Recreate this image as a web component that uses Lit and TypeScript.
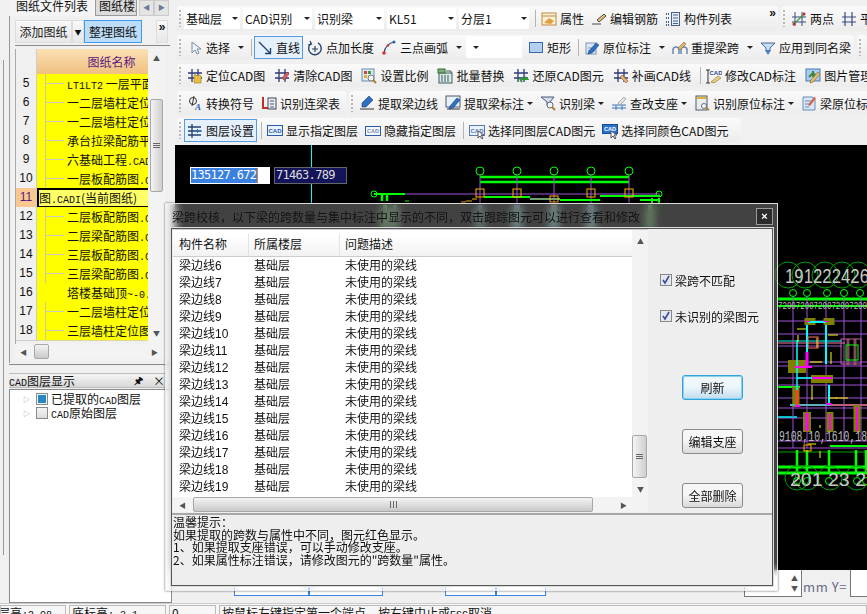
import { LitElement, html, css, svg, nothing } from 'lit';
import { customElement } from 'lit/decorators.js';

const grid = svg`<path d="M5 1v13M11 1v13M1 5h14M1 10h14" stroke="#2b3a78" stroke-width="1.3" fill="none"/>`;
const cadTag = (c: string) => svg`<rect x=".5" y="2.5" width="15" height="10" fill="#e8f2fc" stroke=${c}/><text x="8" y="10" font-size="6" font-weight="700" text-anchor="middle" font-family="Liberation Sans" fill=${c}>CAD</text>`;
const pencil = svg`<path d="M6 12l7-8 2 2-7 8-3 1z" fill="#e8c070" stroke="#8a6a30" stroke-width=".7"/>`;
const bluePen = svg`<path d="M5 11l7-8 3 2-7 8-4 1z" fill="#2f6fc0" stroke="#173f80" stroke-width=".6"/>`;

const icons: Record<string, unknown> = {
  cursor: svg`<path d="M5 2v11l3-3 2 4 2-1-2-4h4z" fill="#eef2fa" stroke="#7d8ba3"/>`,
  line: svg`<path d="M2 2l11 11M8 13.5h5.5V8" fill="none" stroke="#1f3f6e" stroke-width="1.3"/>`,
  addLen: svg`<path d="M4 3.5a6.3 6.3 0 1 0 7-.6" fill="none" stroke="#24406e" stroke-width="1.4"/><path d="M3 1l1.500 3L1 5M8 6v6M5 9h6" fill="none" stroke="#24406e" stroke-width="1.200"/>`,
  arc: svg`<path d="M3 13C4 7 8 3 13 2" fill="none" stroke="#24406e" stroke-width="1.200"/><circle cx="3" cy="13" r="1.800" fill="#d8382c"/><circle cx="7" cy="5.500" r="1.300" fill="#d8382c"/><circle cx="13" cy="2" r="1.500" fill="#2a62b8"/>`,
  rect: svg`<rect x="1.500" y="2.500" width="13" height="10" fill="#b4cef0" stroke="#3668b0"/>`,
  attr: svg`<rect x="1" y="2" width="14" height="12" fill="#fbf0d8" stroke="#c08a40"/><path d="M1 5h14" stroke="#c08a40"/><path d="M3 12l5-5 5 3-3 3z" fill="#e0a040"/>`,
  rebar: svg`<path d="M1 13h9M6 9l7-6 2 2-7 6z" fill="#e8c070" stroke="#4a4a4a"/>`,
  list: svg`<path d="M1 3h3M1 7h3M1 11h3M1 14h3" stroke="#44618c" stroke-dasharray="1 1" stroke-width="2"/><rect x="6.500" y="1.500" width="8" height="13" fill="#e6eef8" stroke="#44618c"/><path d="M8 4h5M8 7h5M8 10h5M8 12.500h5" stroke="#44618c"/>`,
  twoPt: svg`<path d="M4 1v14M11 1v14M1 6h14M1 11h14" stroke="#3a4a80"/><path d="M2 14L14 2" stroke="#3c9a3c" stroke-width="1.300"/><circle cx="3" cy="13" r="1.500" fill="#c03028"/><circle cx="13" cy="3" r="1.500" fill="#c03028"/>`,
  grid2: svg`<path d="M4 1v14M11 1v14M1 6h14M1 11h14" stroke="#3a4a80" stroke-width="1.200"/>`,
  spanFix: svg`<rect x="2" y="3" width="10" height="11" fill="#dce8f8" stroke="#7a94b8"/><path d="M4 11h7M4 8h4" stroke="#7a94b8"/>${bluePen}`,
  respan: svg`<path d="M1 14v-4a3 3 0 0 1 6 0v4M9 14v-4a3 3 0 0 1 6 0v4" fill="none" stroke="#6a8ab0" stroke-width="1.500"/><path d="M6 8l6-6 2 2-6 6z" fill="#e0b070" stroke="#8a6a30" stroke-width=".6"/>`,
  apply: svg`<path d="M1 3h14l-5 5v3H6V8z" fill="#c8dcf4" stroke="#4a6a98"/><path d="M5 10l3 5 3-5z" fill="#4a7ac0"/>`,
  locate: svg`${grid}<path d="M7 15V8l1-2 1 2 1-1 1 1 1-1 2 1v7z" fill="#e8c040" stroke="#a07820" stroke-width=".6"/>`,
  clear: svg`${grid}<path d="M8 10l5-6 2 2-5 6z" fill="#e06060" stroke="#803030" stroke-width=".6"/>`,
  scale: svg`<rect x="1" y="1" width="12" height="12" fill="#d8ecf8" stroke="#6a8aa8"/><rect x="3" y="3" width="3" height="3" fill="#d84030"/><rect x="7" y="3" width="3" height="3" fill="#3c9a3c"/><rect x="3" y="7" width="3" height="3" fill="#e8b030"/><circle cx="10" cy="10" r="3" fill="#f0f4f8" stroke="#7a7a7a"/><path d="M12 12l3 3" stroke="#b08030" stroke-width="2"/>`,
  batch: svg`<rect x="2" y="5" width="13" height="10" fill="#dce8e8" stroke="#3a6060"/><path d="M5 7v7M8 7v7M11 7v7" stroke="#3a6060"/><rect x="1" y="1" width="7" height="4" fill="#7ab07a" stroke="#3a6a3a"/><path d="M9 3h5v2" fill="none" stroke="#3a6060"/>`,
  restore: svg`${grid}<path d="M7 11h7l-2-2M7 11l2 3" fill="none" stroke="#2c9a2c" stroke-width="2"/>`,
  patch: svg`${grid}<path d="M7 9l2-2 6 6-2 2z" fill="#e8b070" stroke="#8a5a30" stroke-width=".6"/>`,
  modCad: svg`<path d="M2 2v13M0 2h4M0 15h4" stroke="#333"/><text x="10" y="7" font-size="6" font-weight="700" text-anchor="middle" font-family="Liberation Sans" fill="#2a4a90">CAD</text><path d="M5 14l7-6 3 2-7 5z" fill="#e8d080" stroke="#8a6a30" stroke-width=".6"/>`,
  picture: svg`<rect x="1" y="1" width="14" height="12" fill="#a8ccf0" stroke="#4a7ab0"/><path d="M8 3v6M4 9l4-4 4 4" stroke="#3c8a3c" stroke-width="2" fill="none"/>${pencil}`,
  convert: svg`<circle cx="6" cy="6" r="3.500" fill="none" stroke="#333"/><path d="M7 1L5 11" stroke="#333"/><text x="11" y="15" font-size="9" font-style="italic" font-weight="700" font-family="Liberation Serif" fill="#2a62b8" text-anchor="middle">A</text>`,
  linkTable: svg`<path d="M2 2v11h6" fill="none" stroke="#c03028" stroke-width="2"/><rect x="7" y="3" width="8" height="11" fill="#e8eef8" stroke="#445"/><path d="M9 6h4M9 9h4M9 12h4" stroke="#556"/>`,
  edge: svg`<path d="M1 14h14" stroke="#333"/><path d="M3 12V8l7-7 4 4-7 7z" fill="#2f6fc0" stroke="#173f80" stroke-width=".6"/>`,
  mark: svg`<rect x="1" y="1" width="14" height="11" fill="#e8f0f8" stroke="#4a5a70"/><path d="M2 14h13" stroke="#333"/>${bluePen}`,
  beam: svg`<path d="M1 2h13l-4 5v3H7V7z" fill="#d0dcec" stroke="#4a5a78"/><circle cx="10" cy="10" r="3" fill="#f0f4f8" stroke="#667"/><path d="M12 12l3 3" stroke="#b08030" stroke-width="2"/>`,
  support: svg`<path d="M1 10h14M1 13h14" stroke="#3a78c0"/><path d="M5 10v5M11 10v5" stroke="#3a78c0"/><path d="M7 8l6-6 2 2-6 6z" fill="#e4e4e4" stroke="#909090" stroke-width=".7"/>`,
  inPlace: svg`<rect x="2" y="1" width="11" height="14" fill="#e8eef0" stroke="#4a5a68"/><rect x="3" y="2" width="9" height="2" fill="#e0b030"/><circle cx="10" cy="11" r="2.500" fill="#fff" stroke="#667"/><path d="M12 13l3 2" stroke="#b08030" stroke-width="2"/>`,
  inPlace2: svg`<path d="M2 2h9l3 2v11H2z" fill="#d8e6f8" stroke="#6a8ab8"/><path d="M4 6h6M4 9h6M4 12h4" stroke="#6a8ab8"/><path d="M7 10l6-8 2 1-6 8z" fill="#d86040"/>`,
  layers: svg`<path d="M5 1v14M1 4h13M1 8h13M1 12h13" stroke="#24406e" stroke-width="1.300"/><path d="M9 8h6M9 8l2-2M9 8l2 2" stroke="#2c6ac0"/>`,
  cadShow: cadTag('#2a5aa8'),
  cadHide: svg`<rect x=".5" y="3.500" width="15" height="9" fill="#f4f8fc" stroke="#2a5aa8"/><text x="8" y="10" font-size="5.500" font-weight="700" text-anchor="middle" font-family="Liberation Sans" fill="#7a8aa8">CAD</text>`,
  cadPick: svg`${cadTag('#5a7ab0')}<path d="M9 8v7l2-2 2 3 1-1-2-3h3z" fill="#fff" stroke="#556"/>`,
  cadColor: svg`<rect x=".5" y="1.500" width="15" height="9" fill="#2a72d0" stroke="#1a4a98"/><text x="8" y="8" font-size="5.500" font-weight="700" text-anchor="middle" font-family="Liberation Sans" fill="#fff">CAD</text><path d="M9 8v7l2-2 2 3 1-1-2-3h3z" fill="#fff" stroke="#556"/>`,
};

type Item =
  | { k: 'sel'; t: string; w: number }
  | { k: 'sep' }
  | { k: 'more' }
  | { k: 'btn'; i: string; t: string; drop?: boolean; on?: boolean };

const b = (i: string, t: string, drop = false, on = false): Item => ({ k: 'btn', i, t, drop, on });
const sel = (t: string, w: number): Item => ({ k: 'sel', t, w });
const sep: Item = { k: 'sep' };

const rows: { w?: number; items: Item[] }[][] = [
  [
    {
      w: 601,
      items: [
        sel('基础层', 56), sel('CAD识别', 69), sel('识别梁', 69), sel('KL51', 69), sel('分层1', 70), sep,
        b('attr', '属性'), b('rebar', '编辑钢筋'), b('list', '构件列表'), { k: 'more' },
      ],
    },
    { items: [b('twoPt', '两点'), b('grid2', '平')] },
  ],
  [
    {
      w: 677,
      items: [
        b('cursor', '选择', true), sep, b('line', '直线', false, true), b('addLen', '点加长度'), b('arc', '三点画弧', true),
        sel('', 56), b('rect', '矩形'), sep, b('spanFix', '原位标注', true), b('respan', '重提梁跨', true), b('apply', '应用到同名梁'),
      ],
    },
    { items: [] },
  ],
  [
    {
      items: [
        b('locate', '定位CAD图'), b('clear', '清除CAD图'), b('scale', '设置比例'), b('batch', '批量替换'),
        b('restore', '还原CAD图元'), b('patch', '补画CAD线'), sep, b('modCad', '修改CAD标注'), b('picture', '图片管理'),
      ],
    },
  ],
  [
    { w: 169, items: [b('convert', '转换符号'), b('linkTable', '识别连梁表')] },
    {
      items: [
        b('edge', '提取梁边线'), b('mark', '提取梁标注', true), b('beam', '识别梁', true), b('support', '查改支座', true),
        b('inPlace', '识别原位标注', true), b('inPlace2', '梁原位标注'),
      ],
    },
  ],
  [
    {
      w: 564,
      items: [
        b('layers', '图层设置', false, true), sep, b('cadShow', '显示指定图层'), b('cadHide', '隐藏指定图层'), sep,
        b('cadPick', '选择同图层CAD图元'), b('cadColor', '选择同颜色CAD图元'),
      ],
    },
  ],
];

const drawings: [number, string, boolean?][] = [
  [5, 'LT1LT2 一层平面图', true],
  [6, '一二层墙柱定位图', true],
  [7, '一二层墙柱定位图', true],
  [8, '承台拉梁配筋平面', true],
  [9, '六基础工程.CADI', true],
  [10, '一层板配筋图.CADI', true],
  [11, '图.CADI(当前图纸)'],
  [12, '二层板配筋图.CADI', true],
  [13, '二层梁配筋图.CADI', true],
  [14, '三层板配筋图.CADI', true],
  [15, '三层梁配筋图.CADI', true],
  [16, '塔楼基础顶~-0.05', false],
  [17, '一二层墙柱定位图', true],
  [18, '三层墙柱定位图.C', true],
];

// [x1, y1, x2, y2, colour, width]
type Seg = [number, number, number, number, string, number];
const G = '#00ff00';
const P = '#a050d8';
const C = '#00ffff';
const M = '#ff00ff';
const Y = '#ffff00';
const O = '#808000';
const A = '#ffb000';

const segs: Seg[] = [
  // upper elevation
  [374, 194, 405, 194, G, 2], [382, 195, 382, 201, G, 2.5], [387, 195, 387, 201, G, 2.5], [405, 201, 409, 201, G, 1],
  [405, 194, 660, 194, P, 1], [480, 177, 629, 177, G, 2.5], [480, 182, 629, 182, G, 2.5],
  [480, 175, 480, 203, P, 1], [517, 175, 517, 203, P, 1], [554, 175, 554, 203, P, 1], [591, 175, 591, 203, P, 1], [629, 175, 629, 203, P, 1],
  [484, 197, 530, 197, G, 2], [530, 199, 560, 199, '#70a070', 2], [560, 200, 600, 200, G, 2], [600, 196, 660, 196, G, 2], [640, 200, 660, 200, G, 2],
  [461, 202, 466, 202, A, 1], [466, 201, 472, 201, A, 1], [472, 199, 477, 199, A, 1],
  [659, 198, 659, 204, G, 2], [652, 198, 652, 204, G, 2],
  [385, 205, 385, 232, '#70c070', 4], [395, 205, 395, 232, '#70a070', 4], [480, 205, 480, 232, '#70a0a0', 4], [517, 205, 517, 232, '#70a0a0', 6], [554, 205, 554, 232, '#70a0a0', 6], [591, 205, 591, 232, '#70a0a0', 6], [650, 205, 650, 232, '#70c070', 4],
  // right plan: horizontal grid
  [778, 299, 867, 299, G, 3], [778, 306, 867, 306, G, 2],
  [778, 321, 867, 321, P, 1], [778, 334, 867, 334, P, 1], [778, 341, 842, 341, C, 1], [778, 343, 845, 343, '#ff80a0', 1], [778, 346, 842, 346, P, 1],
  [778, 362, 867, 362, P, 1], [778, 366, 867, 366, P, 1], [778, 378, 867, 378, P, 1], [778, 385, 867, 385, P, 1], [778, 387, 800, 387, G, 2], [778, 398, 867, 398, P, 1],
  [790, 405, 867, 405, '#ff80a0', 1.5], [778, 408, 867, 408, P, 1], [778, 418, 867, 418, P, 1], [778, 417, 797, 417, C, 1.500], [778, 441, 867, 441, P, 1], [778, 448, 867, 448, P, 1],
  [830, 446, 867, 446, G, 2], [778, 452, 867, 452, '#00a000', 1], [778, 467, 867, 467, G, 3], [778, 473, 867, 473, G, 3],
  // right plan: grid verticals
  [793, 297, 793, 448, P, 1], [807, 297, 807, 448, P, 1], [826, 297, 826, 441, P, 1], [844, 297, 844, 441, P, 1], [861, 297, 861, 441, P, 1],
  // olive walls
  [810, 318, 810, 325, O, 11], [829, 318, 829, 325, O, 11], [797, 360, 797, 373, O, 18], [822, 375, 822, 383, O, 22], [796, 387, 796, 407, O, 7],
  [807, 412, 807, 432, O, 8], [830, 412, 830, 432, O, 7], [857, 405, 857, 432, O, 7], [848, 339, 848, 365, '#804858', 3], [855, 339, 855, 365, '#804858', 3],
  // beams
  [808, 322, 826, 322, C, 2], [807, 325, 807, 360, C, 2], [826, 325, 826, 364, C, 2], [829, 385, 829, 405, C, 2], [797, 378, 830, 378, C, 1.500], [797, 340, 797, 395, C, 1.500], [790, 405, 830, 405, C, 1],
  [808, 321, 808, 322, M, 5], [826, 321, 826, 322, M, 5], [829, 403, 829, 405, M, 5], [795, 367, 812, 367, M, 2], [807, 352, 807, 366, M, 3], [812, 378, 832, 378, M, 2], [797, 390, 797, 407, '#ff4020', 2.500], [807, 413, 807, 431, M, 3], [830, 414, 830, 430, M, 2], [857, 407, 857, 431, M, 2], [798, 405, 798, 407, M, 5],
  // yellow ticks
  [797, 329, 806, 329, Y, 1], [828, 335, 838, 335, Y, 1], [798, 335, 798, 342, Y, 1], [817, 338, 817, 348, Y, 1], [831, 352, 831, 364, Y, 1], [810, 362, 822, 362, Y, 1], [836, 398, 848, 398, Y, 1], [812, 400, 812, 385, Y, 1], [820, 425, 820, 428, Y, 1], [808, 444, 816, 444, Y, 1], [820, 451, 820, 458, Y, 1], [829, 398, 837, 398, Y, 1],
  // lower stubs
  [797, 450, 797, 472, G, 2.500], [807, 450, 807, 472, G, 2.500], [829, 450, 829, 472, G, 2.500], [856, 450, 856, 472, G, 2.500], [866, 450, 866, 472, G, 2.500],
];

const dots: [number, number, number, string][] = [
  [480, 171, 4, G], [517, 171, 4, G], [554, 171, 4, G], [591, 171, 4, G], [629, 171, 4, G], [374, 194, 3, G], [659, 194, 3, G],
  [793, 293, 3.500, G], [807, 293, 3.500, G], [827, 293, 3.500, G], [844, 293, 3.500, G], [860, 293, 3.500, G],
  [788, 275, 13, '#00a000'], [805, 275, 13, '#00a000'], [825, 275, 13, '#00a000'], [842, 275, 13, '#00a000'], [858, 275, 13, '#00a000'],
  [797, 478, 12, '#00a000'], [807, 478, 12, '#00a000'], [830, 478, 12, '#00a000'], [857, 478, 12, '#00a000'],
  [797, 481, 3.500, G], [807, 481, 3.500, G], [829, 481, 3.500, G], [857, 481, 3.500, G], [866, 481, 3.500, G],
];

const boxes: [number, number, number, number, string][] = [
  [476, 189, 8, 8, A], [513, 189, 8, 8, A], [550, 196, 8, 6, A], [587, 189, 8, 8, A], [625, 189, 8, 8, A],
  [841, 339, 20, 25, '#c060a0'], [846, 345, 12, 15, G], [808, 337, 10, 11, '#ff7060'], [804, 445, 7, 6, A],
];

const listRows = Array.from({ length: 14 }, (_, i) => i + 6);

@customElement('app-root')
export class AppRoot extends LitElement {
  static override styles = css`
    :host {
      display: block;
      position: relative;
      width: 867px;
      height: 614px;
      overflow: hidden;
      background: #f0f0f0;
      font: 12px 'Noto Sans CJK SC', sans-serif;
      color: #111;
    }

    .app {
      display: grid;
      grid-template-columns: 175px 692px;
      height: 603px;
    }

    /* left dock */
    .left {
      display: flex;
      flex-direction: column;
      padding-left: 12px;
      box-sizing: border-box;
      width: 172px;
      min-height: 0;
      background:
        linear-gradient(#999, #999) 3px 60px / 1px 495px no-repeat,
        linear-gradient(#999, #999) 9px 15px / 1px 348px no-repeat;
    }

    .tabs {
      display: flex;
      height: 16px;
      overflow: hidden;
      line-height: 12px;
      font-size: 12px;
      margin-left: -3px;
    }

    .tab {
      padding: 0 7px;
      background: #f4f4f4;
      border-right: 1px solid #999;
    }

    .tab.off {
      background: #dcdcdc;
      padding: 0 0 0 3px;
      width: 41px;
      box-sizing: border-box;
      border-bottom: 1px solid #999;
      overflow: hidden;
      white-space: nowrap;
      margin-right: 2px;
    }

    .arrow-btn {
      width: 15px;
      background: #e4e4e4;
      border: 1px solid #ccc;
      box-sizing: border-box;
      color: #6a7a9a;
      text-align: center;
      font-size: 7px;
      line-height: 13px;
    }

    .tools {
      display: flex;
      align-items: stretch;
      height: 23px;
      margin: 4px 2px 0 3px;
      padding-bottom: 2px;
      border-bottom: 1px solid #888;
    }

    .tool {
      display: flex;
      align-items: center;
      justify-content: center;
      background: linear-gradient(#f8f8f8, #e8e8e8);
      border: 1px solid #ddd;
      box-sizing: border-box;
    }

    .tool.add {
      width: 57px;
      color: #222;
    }

    .tool.drop {
      width: 12px;
      font-size: 7px;
    }

    .tool.sort {
      width: 58px;
      background: #bcdcf8;
      border: 1px solid #3e9cf0;
    }

    .tool.more {
      width: 12px;
      margin-left: 14px;
      font: 700 12px/12px 'Liberation Sans', sans-serif;
      color: #111;
      align-items: flex-start;
    }

    .sheet {
      display: grid;
      grid-template-columns: 132px 17px;
      height: 295px;
      margin: 3px 0 0 3px;
      border-left: 1px solid #aaa;
      width: 150px;
    }

    .table {
      overflow: hidden;
      background: #f0f0f0;
    }

    .thead {
      display: grid;
      grid-template-columns: 21px 111px;
      height: 25px;
    }

    .corner {
      background: #f0f0f0;
      border-right: 1px solid #ccc;
    }

    .title {
      background: linear-gradient(#fbe0b4, #f0c080);
      color: #5a1a80;
      text-align: center;
      line-height: 25px;
      padding-left: 38px;
      white-space: nowrap;
    }

    .row {
      display: grid;
      grid-template-columns: 21px 111px;
      height: 19px;
      line-height: 19px;
      box-sizing: border-box;
      position: relative;
    }

    .num {
      text-align: center;
      background: #f0f0f0;
      border-right: 1px solid #ccc;
      border-bottom: 1px solid #ccc;
      font: 12px 'Liberation Sans', sans-serif;
      line-height: 19px;
    }

    .name {
      background: #ffff00;
      border-bottom: 1px solid #d8d8a0;
      white-space: nowrap;
      overflow: hidden;
      padding-left: 30px;
      position: relative;
    }

    .name.leaf::before {
      content: '';
      position: absolute;
      left: 8px;
      top: 0;
      bottom: 0;
      width: 18px;
      border-left: 1px solid #c8c8b0;
      background: linear-gradient(#c8c8c8, #c8c8c8) left 9px / 18px 1px no-repeat;
    }

    .row.cur .num {
      background: #f8c890;
      color: #5a1a80;
    }

    .row.cur .name {
      background: #ffff66;
      padding-left: 2px;
      box-shadow: inset 2px 2px 0 #000, inset 0 -2px 0 #000;
      border: 0;
    }

    .mono {
      font: 10px 'Liberation Mono', monospace;
    }

    .vbar {
      position: relative;
      background: #f3f3f3;
    }

    .thumb {
      position: absolute;
      background: linear-gradient(90deg, #f4f4f4, #cfcfcf);
      border: 1px solid #a8a8a8;
      border-radius: 2px;
      box-sizing: border-box;
      display: flex;
      align-items: center;
      justify-content: center;
      color: #666;
      font-size: 8px;
    }

    .thumb.h {
      background: linear-gradient(#f4f4f4, #c8c8c8);
    }

    .grip-v {
      width: 7px;
      height: 6px;
      background: repeating-linear-gradient(#666 0 1px, transparent 1px 2px);
    }

    .grip-h {
      width: 7px;
      height: 7px;
      background: repeating-linear-gradient(90deg, #666 0 1px, transparent 1px 3px);
    }

    .tri {
      position: absolute;
      font-size: 7px;
      line-height: 8px;
      color: #555;
    }

    .hbar {
      position: relative;
      height: 15px;
      background: #f3f3f3;
    }

    .left .hbar {
      margin: 0 0 0 3px;
      width: 150px;
    }

    .dock-end {
      height: 5px;
      border-bottom: 1px solid #888;
      margin-left: -3px;
    }

    .dock-head {
      display: flex;
      align-items: center;
      height: 15px;
      margin: 8px 7px 0 -3px;
      background: linear-gradient(#f4f4f4, #d8d8d8);
      border-top: 1px solid #bbb;
      border-bottom: 1px solid #bbb;
      box-sizing: border-box;
      white-space: nowrap;
      overflow: hidden;
    }

    .dock-head .pin {
      margin-left: auto;
      margin-right: 10px;
      font-size: 10px;
      font-weight: 700;
    }

    .tree {
      flex: 1;
      background: #fff;
      border: 1px solid #8a8a8a;
      margin: 1px 0 0 -3px;
      padding: 2px 0 0 13px;
      line-height: 14px;
    }

    .node {
      display: flex;
      align-items: center;
      gap: 3px;
      height: 14px;
      white-space: nowrap;
    }

    .node i {
      font-style: normal;
      font-size: 7px;
      color: #999;
      width: 10px;
    }

    .swatch {
      width: 10px;
      height: 10px;
      border: 1px solid #8a8a8a;
      background: linear-gradient(#f4f4f4, #dcdcdc);
    }

    .swatch.on {
      background: #2a86c0;
      box-shadow: inset 0 0 0 1px #e8f4fc;
    }

    /* toolbars */
    .right {
      display: flex;
      flex-direction: column;
      min-width: 0;
      overflow: hidden;
    }

    .bars {
      display: flex;
      flex-direction: column;
      gap: 4px;
      height: 139px;
      padding-top: 6px;
    }

    .bar-row {
      display: flex;
      gap: 3px;
      height: 25px;
      white-space: nowrap;
    }

    .bar-row:nth-child(3) {
      height: 23px;
    }

    .bar-row:nth-child(3) .btn {
      margin-right: 3px;
    }

    .bar-row:nth-child(4) {
      height: 24px;
      margin-bottom: -1px;
    }

    .bar-row:nth-child(4) .caret {
      margin-left: 0;
    }

    .group {
      display: flex;
      align-items: center;
      flex: none;
      background: linear-gradient(#fafafa, #ececec);
      border-radius: 3px;
      padding-left: 2px;
      margin-left: 2px;
      box-sizing: border-box;
    }

    .group + .group {
      margin-left: 0;
    }

    .group:last-child:not(.fixed) {
      flex: 1;
    }

    .gripper {
      width: 2px;
      height: 17px;
      margin-right: 3px;
      flex: none;
      background: repeating-linear-gradient(#b8b8b8 0 2px, transparent 2px 4px);
    }

    .sel {
      display: flex;
      align-items: center;
      justify-content: space-between;
      height: 21px;
      margin-right: 3px;
      padding: 0 2px;
      background: #fff;
      box-sizing: border-box;
      flex: none;
    }

    .caret {
      display: inline-block;
      width: 0;
      height: 0;
      border: 3px solid transparent;
      border-top: 3px solid #222;
      border-bottom: 0;
      margin-left: 5px;
      flex: none;
    }

    .sep {
      width: 1px;
      height: 17px;
      margin: 0 2px 0 3px;
      background: #b4b4b4;
      flex: none;
    }

    .btn {
      display: flex;
      align-items: center;
      gap: 3px;
      height: 23px;
      padding: 0 2px;
      margin-right: 1px;
      box-sizing: border-box;
      border: 1px solid transparent;
      flex: none;
    }

    .btn.on {
      background: #e4f0fc;
      border-color: #5a9ae0;
    }

    .btn svg {
      width: 16px;
      height: 16px;
      flex: none;
    }

    .chev {
      margin-left: auto;
      margin-right: 2px;
      align-self: flex-start;
      font: 700 12px/14px 'Liberation Sans', sans-serif;
    }

    /* drawing area */
    .cad {
      position: relative;
      height: 425px;
      background: #000;
      flex: none;
    }

    .cad svg {
      display: block;
    }

    .coord {
      position: absolute;
      top: 22px;
      height: 17px;
      box-sizing: border-box;
      font: 12px/15px 'DejaVu Sans Mono', 'Liberation Mono', monospace;
      white-space: nowrap;
      letter-spacing: -0.7px;
      overflow: hidden;
    }

    .coord.x {
      left: 15px;
      width: 80px;
      background: #fff;
      padding: 1px 0 0 1px;
    }

    .coord.x span {
      display: inline-block;
      background: #3a80e0;
      color: #fff;
      height: 15px;
      border-right: 1px solid #e08020;
      padding-right: 1px;
    }

    .coord.y {
      left: 99px;
      width: 73px;
      background: #14145a;
      border: 1px solid #666;
      color: #ddd;
      padding-left: 1px;
    }

    .foot {
      display: flex;
      align-items: flex-start;
      flex: 1;
      padding-left: 59px;
      color: #555;
      white-space: nowrap;
    }

    .foot > * {
      flex: none;
    }

    .slot {
      height: 26px;
      box-sizing: border-box;
      border: 1px solid #3a80e0;
      border-top: 0;
      background: #fff;
    }

    .spin {
      display: flex;
      align-items: center;
      justify-content: flex-end;
      height: 27px;
      width: 58px;
      margin-left: 198px;
      padding-right: 3px;
      box-sizing: border-box;
      border: 1px solid #777;
      border-top: 0;
      font-size: 7px;
      background: #fff;
    }

    .unit {
      margin: 9px 3px 0 1px;
      font-size: 13px;
      letter-spacing: 0.6px;
      color: #6a6a8a;
      line-height: 16px;
    }

    .field {
      width: 30px;
      height: 27px;
      border: 1px solid #777;
      border-top: 0;
      box-sizing: border-box;
      background: #fff;
    }

    /* status bar */
    .status {
      display: flex;
      gap: 3px;
      height: 11px;
      background: #f6f6f6;
      border-top: 1px solid #ccc;
      box-sizing: border-box;
      padding-top: 1px;
      overflow: hidden;
      line-height: 14px;
      white-space: nowrap;
    }

    .cell {
      height: 14px;
      border: 1px solid #bbb;
      padding-left: 2px;
      box-sizing: border-box;
      flex: none;
      overflow: hidden;
    }

    .cell.first {
      text-indent: -5px;
    }

    /* aero dialog */
    .dialog {
      position: absolute;
      left: 165px;
      top: 203px;
      width: 613px;
      height: 388px;
      box-sizing: border-box;
      display: flex;
      flex-direction: column;
      background: rgba(255, 255, 255, 0.26);
      backdrop-filter: blur(5px);
      border: 1px solid rgba(235, 235, 235, 0.9);
      box-shadow: 0 0 2px rgba(0, 0, 0, 0.6);
    }

    .dlg-title {
      display: flex;
      align-items: center;
      height: 24px;
      padding: 0 4px 0 6px;
      flex: none;
      color: #141414;
      white-space: nowrap;
    }

    .close {
      margin-left: auto;
      width: 17px;
      height: 17px;
      border: 1px solid #9a9a9a;
      background: #2c2c2c;
      color: #fff;
      box-sizing: border-box;
      font: 700 11px/14px 'Liberation Sans', sans-serif;
      text-align: center;
    }

    .dlg-body {
      flex: 1;
      display: flex;
      flex-direction: column;
      margin: 0 4px 4px 5px;
      background: #eee;
      border: 1px solid #555;
      box-shadow: 0 0 0 1px #ddd;
      min-height: 0;
    }

    .dlg-main {
      display: flex;
      height: 284px;
      border-bottom: 2px solid #a8a8a8;
      flex: none;
    }

    .grid-wrap {
      display: flex;
      flex-direction: column;
      width: 475px;
      flex: none;
      margin-left: 1px;
      border-top: 1px solid #ccc;
    }

    .list-area {
      display: grid;
      grid-template-columns: 459px 16px;
      height: 267px;
      flex: none;
    }

    .list {
      background: #fff;
      padding-top: 4px;
      overflow: hidden;
    }

    .cols,
    .item {
      display: grid;
      grid-template-columns: 75px 91px 1fr;
      padding-left: 6px;
      font-family: 'Liberation Sans', 'Noto Sans CJK SC', sans-serif;
    }

    .cols {
      height: 22px;
      line-height: 22px;
      background: linear-gradient(#fff, #f2f2f2);
      border-bottom: 1px solid #ccc;
      margin-bottom: 1px;
      position: relative;
    }

    .cols span + span {
      border-left: 1px solid #e4e4e4;
      padding-left: 5px;
      margin-left: -6px;
    }

    .item {
      height: 17px;
      line-height: 17px;
      white-space: nowrap;
    }

    .dlg-side {
      flex: 1;
      padding: 44px 0 0 12px;
      box-sizing: border-box;
      background: #eee;
    }

    .check {
      display: flex;
      align-items: center;
      gap: 3px;
      height: 14px;
      margin-bottom: 22px;
      white-space: nowrap;
    }

    .box {
      width: 12px;
      height: 12px;
      border: 1px solid #888;
      background: #e4e8f0;
      box-sizing: border-box;
      display: flex;
    }

    .box svg {
      width: 10px;
      height: 10px;
    }

    .actions {
      display: flex;
      flex-direction: column;
      width: 61px;
      margin: 52px 0 0 22px;
      gap: 29px;
    }

    .push {
      height: 25px;
      border: 1px solid #8a8a8a;
      border-radius: 3px;
      background: linear-gradient(#f6f6f6 45%, #dadada);
      box-sizing: border-box;
      text-align: center;
      line-height: 23px;
      white-space: nowrap;
    }

    .push.focus {
      border: 1px solid #2ea4dc;
      box-shadow: inset 0 0 0 1px #8fd0f0;
      background: linear-gradient(#eef7fc 45%, #c0deee);
    }

    .notes {
      padding: 1px 0 0 1px;
      line-height: 12.7px;
      white-space: nowrap;
    }
  `;

  private renderItem(it: Item) {
    switch (it.k) {
      case 'sep':
        return html`<span class="sep"></span>`;
      case 'more':
        return html`<span class="chev">»</span>`;
      case 'sel':
        return html`<span class="sel" style="width:${it.w}px">${it.t}<span class="caret"></span></span>`;
      default:
        return html`<span class="btn ${it.on ? 'on' : ''}">
          <svg viewBox="0 0 16 16">${icons[it.i]}</svg>${it.t}${it.drop ? html`<span class="caret"></span>` : nothing}
        </span>`;
    }
  }

  private mono(text: string) {
    return text
      .split(/([A-Za-z0-9.:~\-]+)/)
      .map((part, i) => (i % 2 ? html`<span class="mono">${part}</span>` : part));
  }

  private renderCad() {
    return html`<svg width="692" height="425" viewBox="175 145 692 425">
      <path d="M311.500 203V144.500H867" fill="none" stroke="#00ffff"/>
      ${segs.map(([x1, y1, x2, y2, c, w]) => svg`<line x1=${x1} y1=${y1} x2=${x2} y2=${y2} stroke=${c} stroke-width=${w}/>`)}
      ${boxes.map(([x, y, w, h, c]) => svg`<rect x=${x} y=${y} width=${w} height=${h} fill="none" stroke=${c}/>`)}
      ${dots.map(([x, y, r, c]) => svg`<circle cx=${x} cy=${y} r=${r} fill="none" stroke=${c}/>`)}
      <text x="785" y="283" font-size="20" fill="#c8c8c8" font-family="Liberation Sans" textLength="84" lengthAdjust="spacingAndGlyphs">191222426</text>
      <text x="778" y="309" font-size="10" fill="#bbb" font-family="Liberation Mono" textLength="89" lengthAdjust="spacingAndGlyphs">72007200720072007200</text>
      <text x="779" y="441" font-size="14" fill="#bbb" font-family="Liberation Mono" textLength="88" lengthAdjust="spacingAndGlyphs">9108,10,1610,18</text>
      <text x="790" y="486" font-size="18" fill="#c8c8c8" font-family="Liberation Sans" textLength="76" lengthAdjust="spacingAndGlyphs">201 23 2</text>
    </svg>`;
  }

  override render() {
    return html`
      <div class="app">
        <aside class="left">
          <div class="tabs">
            <span class="tab">图纸文件列表</span>
            <span class="tab off">图纸楼层</span>
            <span class="arrow-btn">◀</span>
            <span class="arrow-btn">▶</span>
          </div>
          <div class="tools">
            <span class="tool add">添加图纸</span>
            <span class="tool drop">▼</span>
            <span class="tool sort">整理图纸</span>
            <span class="tool more">»</span>
          </div>
          <div class="sheet">
            <div class="table">
              <div class="thead"><span class="corner"></span><span class="title">图纸名称</span></div>
              ${drawings.map(
                ([n, name, leaf]) => html`<div class="row ${n === 11 ? 'cur' : ''}">
                  <span class="num">${n}</span>
                  <span class="name ${leaf ? 'leaf' : ''}">${this.mono(name)}</span>
                </div>`
              )}
            </div>
            <div class="vbar">
              <span class="tri" style="left:5px;top:5px">▲</span>
              <span class="thumb" style="left:2px;top:50px;width:13px;height:93px"><span class="grip-v"></span></span>
              <span class="tri" style="left:5px;top:280px">▼</span>
            </div>
          </div>
          <div class="hbar">
            <span class="tri" style="left:5px;top:4px">◀</span>
            <span class="thumb h" style="left:19px;top:0;width:15px;height:15px"></span>
            <span class="tri" style="left:136px;top:4px">▶</span>
          </div>
          <div class="dock-end"></div>
          <div class="dock-head">
            <span>${this.mono('CAD图层显示')}</span><span class="pin">🖈</span><span>×</span>
          </div>
          <div class="tree">
            <div class="node"><i>▷</i><span class="swatch on"></span><span>${this.mono('已提取的CAD图层')}</span></div>
            <div class="node"><i>▷</i><span class="swatch"></span><span>${this.mono('CAD原始图层')}</span></div>
          </div>
        </aside>

        <main class="right">
          <div class="bars">
            ${rows.map(
              (row) => html`<div class="bar-row">
                ${row.map(
                  (g) => html`<div class="group ${g.w ? 'fixed' : ''}" style=${g.w ? `width:${g.w}px` : ''}>
                    <span class="gripper"></span>${g.items.map((it) => this.renderItem(it))}
                  </div>`
                )}
              </div>`
            )}
          </div>
          <div class="cad">
            ${this.renderCad()}
            <div class="coord x"><span>135127.672</span></div>
            <div class="coord y">71463.789</div>
          </div>
          <div class="foot">
            <span class="slot" style="width:75px"></span>
            <span class="slot" style="width:74px"></span>
            <span class="slot" style="width:51px;margin-left:62px"></span>
            <span class="slot" style="width:50px"></span>
            <span class="spin">▲<br />▼</span>
            <span class="unit">mm Y=</span>
            <span class="field"></span>
          </div>
        </main>
      </div>

      <div class="status">
        <span class="cell first" style="width:66px">${this.mono('层高:2.98-')}</span>
        <span class="cell" style="width:97px">${this.mono('底标高:-3.1-')}</span>
        <span class="cell" style="width:47px">0</span>
        <span class="cell" style="flex:1">${this.mono('按鼠标左键指定第一个端点，按右键中止或ESC取消')}</span>
      </div>

      <section class="dialog">
        <div class="dlg-title">
          梁跨校核，以下梁的跨数量与集中标注中显示的不同，双击跟踪图元可以进行查看和修改
          <span class="close">×</span>
        </div>
        <div class="dlg-body">
          <div class="dlg-main">
            <div class="grid-wrap">
              <div class="list-area">
                <div class="list">
                  <div class="cols"><span>构件名称</span><span>所属楼层</span><span>问题描述</span></div>
                  ${listRows.map(
                    (n) => html`<div class="item"><span>梁边线${n}</span><span>基础层</span><span>未使用的梁线</span></div>`
                  )}
                </div>
                <div class="vbar">
                  <span class="tri" style="left:5px;top:7px">▲</span>
                  <span class="thumb" style="left:0;top:205px;width:15px;height:43px"><span class="grip-v"></span></span>
                  <span class="tri" style="left:5px;top:255px">▼</span>
                </div>
              </div>
              <div class="hbar">
                <span class="tri" style="left:6px;top:4px">◀</span>
                <span class="thumb h" style="left:20px;top:0;width:400px;height:15px"><span class="grip-h"></span></span>
                <span class="tri" style="left:447px;top:4px">▶</span>
              </div>
            </div>
            <div class="dlg-side">
              ${['梁跨不匹配', '未识别的梁图元'].map(
                (t) => html`<div class="check">
                  <span class="box"><svg viewBox="0 0 10 10"><path d="M2 5l2 3 4-7" fill="none" stroke="#3a4a98" stroke-width="1.600"/></svg></span>${t}
                </div>`
              )}
              <div class="actions">
                <div class="push focus">刷新</div>
                <div class="push">编辑支座</div>
                <div class="push">全部删除</div>
              </div>
            </div>
          </div>
          <div class="notes">
            温馨提示：<br />
            如果提取的跨数与属性中不同，图元红色显示。<br />
            1、如果提取支座错误，可以手动修改支座。<br />
            2、如果属性标注错误，请修改图元的"跨数量"属性。
          </div>
        </div>
      </section>
    `;
  }
}
